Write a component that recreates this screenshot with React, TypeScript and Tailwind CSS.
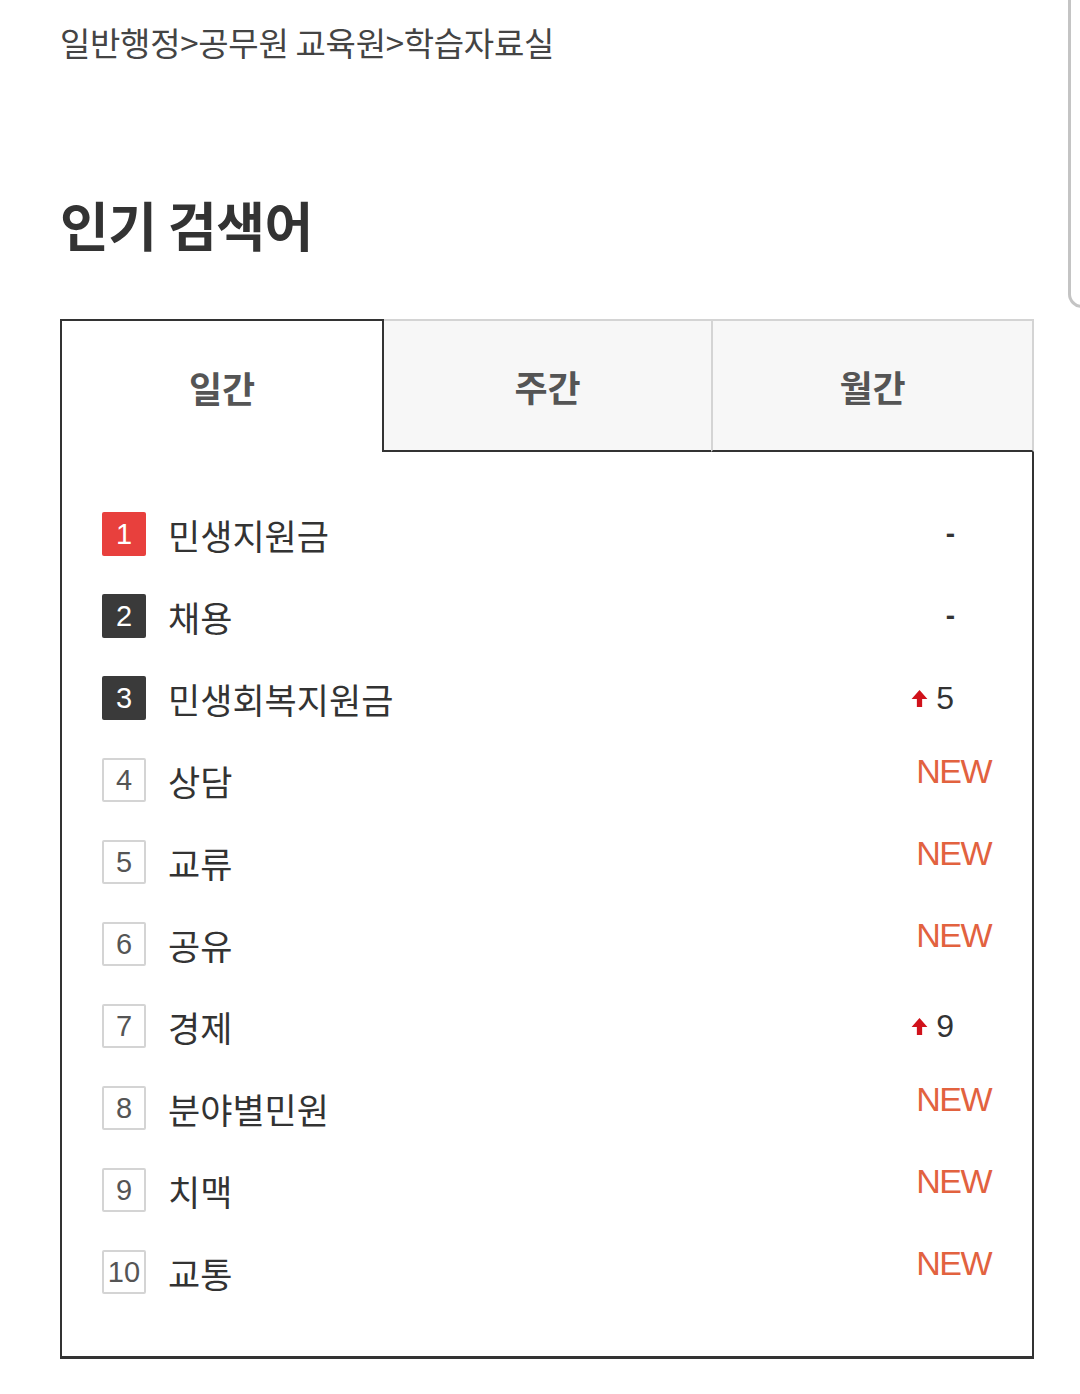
import React from 'react';

type Change = { kind: 'same' } | { kind: 'up'; n: number } | { kind: 'new' };

interface Keyword {
  rank: number;
  word: string;
  change: Change;
}

const keywords: Keyword[] = [
  { rank: 1, word: '민생지원금', change: { kind: 'same' } },
  { rank: 2, word: '채용', change: { kind: 'same' } },
  { rank: 3, word: '민생회복지원금', change: { kind: 'up', n: 5 } },
  { rank: 4, word: '상담', change: { kind: 'new' } },
  { rank: 5, word: '교류', change: { kind: 'new' } },
  { rank: 6, word: '공유', change: { kind: 'new' } },
  { rank: 7, word: '경제', change: { kind: 'up', n: 9 } },
  { rank: 8, word: '분야별민원', change: { kind: 'new' } },
  { rank: 9, word: '치맥', change: { kind: 'new' } },
  { rank: 10, word: '교통', change: { kind: 'new' } }
];

const font = { fontFamily: '"Noto Sans CJK KR", "Liberation Sans", sans-serif' };
const numFont = { fontFamily: '"Liberation Sans", "Noto Sans CJK KR", sans-serif' };

const UpArrow = () => (
  <svg width="17" height="19" viewBox="0 0 16 18" className="mr-[8px]">
    <path d="M8 1 L15.5 9.5 L10.5 9.5 L10.5 17 L5.5 17 L5.5 9.5 L0.5 9.5 Z" fill="#d0121b" />
  </svg>
);

const RankBadge: React.FC<{ rank: number }> = ({ rank }) => {
  let cls = 'bg-white border-2 border-[#d4d4d4] text-[#555]';
  if (rank === 1) cls = 'bg-[#e8403d] text-white';
  else if (rank <= 3) cls = 'bg-[#3a3a3a] text-white';
  return (
    <div
      className={`w-[44px] h-[44px] flex items-center justify-center rounded-[2px] text-[29px] leading-none ${cls}`}
      style={numFont}
    >
      {rank}
    </div>
  );
};

const ChangeMark: React.FC<{ change: Change }> = ({ change }) => {
  if (change.kind === 'new') {
    return (
      <span className="text-[34px] leading-none text-[#e2623f] mb-[18px] tracking-[-1.5px]" style={numFont}>
        NEW
      </span>
    );
  }
  if (change.kind === 'up') {
    return (
      <span className="flex items-center mr-[37px] text-[32px] leading-none text-[#333]" style={numFont}>
        <UpArrow />
        {change.n}
      </span>
    );
  }
  return (
    <span className="mr-[36px] text-[28px] leading-none text-[#333] font-bold" style={numFont}>
      -
    </span>
  );
};

const App: React.FC = () => {
  return (
    <div className="relative w-[1080px] h-[1394px] bg-white overflow-hidden" style={font}>
      {/* scrollbar-ish edge on the right */}
      <div className="absolute left-[1068px] top-[-20px] w-[40px] h-[328px] border-l-[3px] border-b-[3px] border-[#c4c4c4] rounded-bl-[14px]" />

      <div className="pl-[60px] pt-[19px]">
        <div className="text-[33px] leading-[46px] text-[#444] tracking-[-0.3px]">
          일반행정&gt;공무원 교육원&gt;학습자료실
        </div>

        <h1 className="mt-[127px] text-[53px] leading-[64px] font-bold text-[#333] tracking-[-0.5px]">
          인기 검색어
        </h1>

        <div className="mt-[63px] w-[974px]">
          {/* tabs */}
          <div className="flex h-[133px]">
            <div className="w-[324px] bg-white border-2 border-b-0 border-[#333] flex items-center justify-center">
              <span className="text-[36px] font-bold text-[#555]">일간</span>
            </div>
            <div className="w-[327px] bg-[#f7f7f7] border-t-2 border-[#d4d4d4] border-b-2 border-b-[#333] flex items-center justify-center">
              <span className="text-[36px] font-bold text-[#555]">주간</span>
            </div>
            <div className="flex-1 bg-[#f7f7f7] border-t-2 border-l-2 border-r-2 border-[#d4d4d4] border-b-2 border-b-[#333] flex items-center justify-center">
              <span className="text-[36px] font-bold text-[#555]">월간</span>
            </div>
          </div>

          {/* list */}
          <div className="border-l-2 border-r-2 border-b-[3px] border-[#333] pt-[41px] pb-[43px]">
            {keywords.map((k) => (
              <div key={k.rank} className="flex items-center h-[82px] pl-[40px] pr-[41px]">
                <RankBadge rank={k.rank} />
                <span className="ml-[22px] text-[35px] leading-none text-[#333] flex-1">{k.word}</span>
                <ChangeMark change={k.change} />
              </div>
            ))}
          </div>
        </div>
      </div>
    </div>
  );
};

export default App;
